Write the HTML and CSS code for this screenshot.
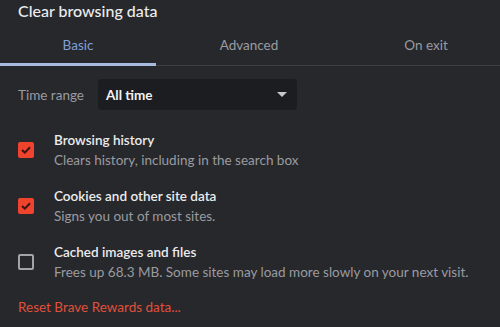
FILE: index.html
```html
<!DOCTYPE html>
<html lang="en">
<head>
    <meta charset="UTF-8">
    <title>Clear browsing data</title>
    <link rel="stylesheet" href="styles.css">
</head>
<body>
    <div class="dialog">
        <h1 class="title">Clear browsing data</h1>

        <div class="tabs">
            <a class="tab basic active">Basic</a>
            <a class="tab advanced">Advanced</a>
            <a class="tab exit">On exit</a>
        </div>

        <div class="range">
            <span class="range-label">Time range</span>
            <div class="select">
                <span>All time</span>
                <span class="arrow"></span>
            </div>
        </div>

        <div class="option">
            <span class="box checked">
                <svg width="10" height="8" viewBox="0 0 10 8"><path d="M1 4 L3.8 6.6 L9 1.2" fill="none" stroke="#3a1410" stroke-width="2"/></svg>
            </span>
            <div class="option-text">
                <div class="option-title">Browsing history</div>
                <div class="option-sub">Clears history, including in the search box</div>
            </div>
        </div>

        <div class="option">
            <span class="box checked">
                <svg width="10" height="8" viewBox="0 0 10 8"><path d="M1 4 L3.8 6.6 L9 1.2" fill="none" stroke="#3a1410" stroke-width="2"/></svg>
            </span>
            <div class="option-text">
                <div class="option-title">Cookies and other site data</div>
                <div class="option-sub">Signs you out of most sites.</div>
            </div>
        </div>

        <div class="option">
            <span class="box"></span>
            <div class="option-text">
                <div class="option-title">Cached images and files</div>
                <div class="option-sub">Frees up 68.3 MB. Some sites may load more slowly on your next visit.</div>
            </div>
        </div>

        <a class="reset">Reset Brave Rewards data...</a>
    </div>
</body>
</html>
```

FILE: styles.css
```css
body {
    margin: 0;
    background-color: #27282c;
    font-family: Lato, "Noto Sans", sans-serif;
    color: #e8e8ea;
}

.dialog {
    width: 500px;
    height: 327px;
    overflow: hidden;
}

.title {
    margin: 0;
    padding: 0 18px;
    font-size: 16px;
    font-weight: 500;
    line-height: 22px;
    color: #ececee;
}

.tabs {
    display: flex;
    margin-top: 11px;
    border-bottom: 1px solid #3e3f44;
}

.tab {
    text-align: center;
    font-size: 13.5px;
    color: #9a9ba0;
    padding: 4px 0 10px;
    border-bottom: 3px solid transparent;
    margin-bottom: -1px;
}

.basic {
    width: 156px;
}

.advanced {
    width: 186px;
}

.exit {
    flex: 1;
    padding-left: 10px;
}

.tab.active {
    color: #7f9fd6;
    border-bottom-color: #a9bcdf;
}

.range {
    display: flex;
    align-items: center;
    padding: 13px 18px 0;
}

.range-label {
    width: 80px;
    font-size: 13.5px;
    color: #9a9ba0;
}

.select {
    width: 199px;
    height: 31px;
    box-sizing: border-box;
    background-color: #1c1d20;
    border-radius: 4px;
    display: flex;
    align-items: center;
    justify-content: space-between;
    padding: 0 8px;
    font-size: 13.5px;
    font-weight: bold;
    color: #f2f2f4;
}

.arrow {
    width: 0;
    height: 0;
    border-left: 5px solid transparent;
    border-right: 5px solid transparent;
    border-top: 5px solid #c8c8cc;
    margin-right: 2px;
}

.option {
    display: flex;
    align-items: center;
    padding: 0 18px;
    margin-top: 16px;
    height: 40px;
}

.range + .option {
    margin-top: 20px;
}

.box {
    width: 16px;
    height: 16px;
    box-sizing: border-box;
    border: 2px solid #a3a4a8;
    border-radius: 2px;
    margin-right: 20px;
    display: flex;
    align-items: center;
    justify-content: center;
    flex-shrink: 0;
}

.box.checked {
    background-color: #f0432e;
    border-color: #f0432e;
}

.option-title {
    font-size: 13.5px;
    font-weight: 600;
    color: #ececee;
    line-height: 20px;
}

.option-sub {
    font-size: 13.5px;
    color: #9a9ba0;
    line-height: 20px;
}

.reset {
    display: block;
    padding: 0 18px;
    margin-top: 17px;
    font-size: 13.5px;
    color: #e0503b;
}
```
